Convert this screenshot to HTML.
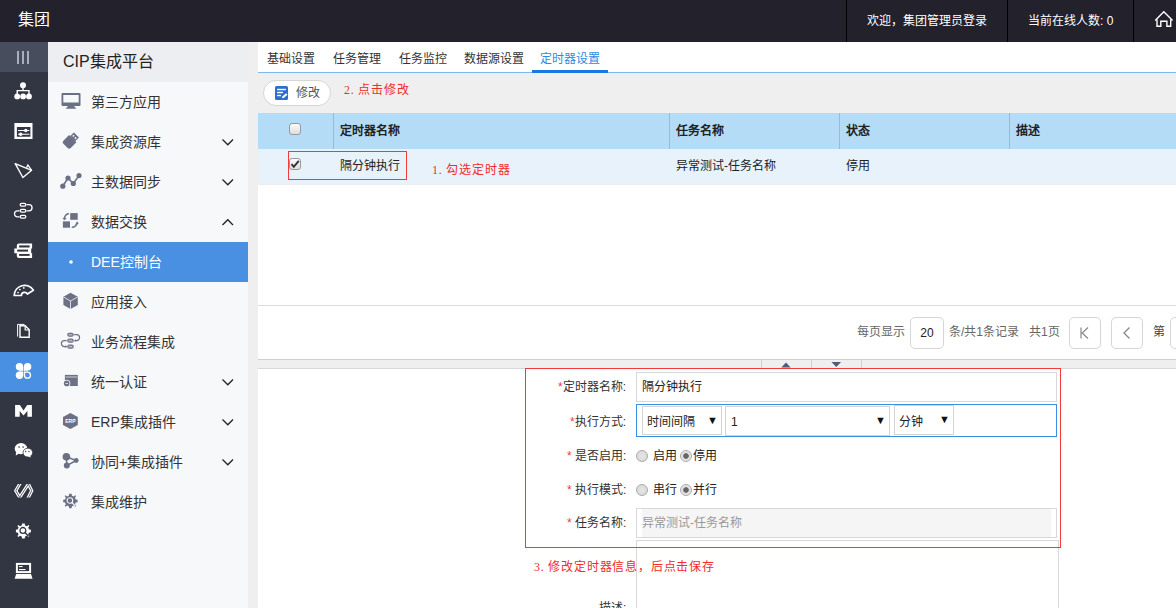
<!DOCTYPE html>
<html lang="zh-CN"><head><meta charset="utf-8">
<style>
*{margin:0;padding:0;box-sizing:border-box}
html,body{width:1176px;height:608px;overflow:hidden;background:#fff;font-family:"Liberation Sans",sans-serif;}
.abs{position:absolute}
#top{position:absolute;left:0;top:0;width:1176px;height:42px;background:#22212c;color:#fff}
#top .brand{position:absolute;left:18px;top:11px;font-size:16px;line-height:18px}
#top .sep{position:absolute;top:0;width:1px;height:42px;background:#000}
#top .t{position:absolute;top:14px;font-size:12px;line-height:14px;color:#fff}
#strip{position:absolute;left:0;top:42px;width:48px;height:566px;background:#323642}
#strip .it{position:absolute;left:0;width:48px;height:40px}
#side{position:absolute;left:48px;top:42px;width:200px;height:566px;background:#f7f8fa}
#side .hd{position:absolute;left:0;top:0;width:200px;height:40px;background:#eceef2;font-size:16px;line-height:18px;color:#222}
#side .mi{position:absolute;left:0;width:200px;height:40px;font-size:14px;color:#333}
#side .mi .tx{position:absolute;left:43px;top:12px;line-height:16px}
#side .mi .ic{position:absolute;left:13px;top:11px;width:20px;height:18px}
#side .mi .chev{position:absolute;left:174px;top:16px;width:12px;height:8px}
#gap{position:absolute;left:248px;top:42px;width:10px;height:566px;background:#efefef}
#main{position:absolute;left:258px;top:42px;width:918px;height:566px;background:#fff}
.tab{position:absolute;top:10px;font-size:12px;line-height:14px;color:#333}
.tab.act{color:#2f8ae0}
.btn{background:#fff;border:1px solid #d6d6d6;border-radius:13px}
.red{font-family:"Liberation Serif",serif;font-size:12px;line-height:15px;letter-spacing:0.8px;padding-top:1px;color:#f22b2b;font-weight:500}
.vd{position:absolute;top:71px;width:1px;height:36px;background:#a2b6d3}
.cb{position:absolute;width:12px;height:12px;border:1px solid #999;border-radius:3px;background:linear-gradient(#fbfbfb,#dedede)}
.th{position:absolute;top:82px;font-size:12px;line-height:14px;font-weight:bold;color:#222}
.td{position:absolute;top:117px;font-size:12px;line-height:14px;color:#222}
.pg{position:absolute;top:283px;font-size:12px;line-height:14px;color:#666}
.pbox{position:absolute;top:275px;height:32px;border:1px solid #d6d6d6;border-radius:5px;background:#fff}
.lbl{position:absolute;margin-top:1px;font-size:12px;line-height:14px;color:#333}
.st{color:#ee3c3c}
.inp{position:absolute;border:1px solid #d8d8d8;background:#fff}
.sel{position:absolute;border:1px solid #d4d4d4;background:#fff}
.ftx{position:absolute;margin-top:1px;font-size:12px;line-height:14px;color:#222}
.arr{position:absolute;font-size:11px;line-height:10px;color:#111}
.rad{position:absolute;width:12px;height:12px;border:1px solid #aaa;border-radius:50%;background:radial-gradient(#e6e6e6,#d6d6d6)}
.rad.on{background:radial-gradient(circle,#666 0,#666 2.4px,#ddd 3.1px,#eee 6px)}
</style></head><body>
<div id="top">
  <div class="brand">集团</div>
  <div class="sep" style="left:846px"></div>
  <div class="t" style="left:867px">欢迎，集团管理员登录</div>
  <div class="sep" style="left:1007px"></div>
  <div class="t" style="left:1028px">当前在线人数: 0</div>
  <div class="sep" style="left:1133px"></div>
  <svg class="abs" style="left:1150px;top:6px" width="26" height="26" viewBox="1150 6 26 26"><path d="M1155.2 20.4L1163.8 11.8L1172.6 20.4M1157 19.6V26.2H1160.8V21.2H1166.9V26.2H1170.7V19.6" fill="none" stroke="#fff" stroke-width="1.4" stroke-linejoin="miter"/></svg>
</div>
<div id="strip">
  <div class="it" style="top:0;height:30px;background:#484d5e"></div>
  <div class="it" style="top:310px;height:40px;background:#4a90e2"></div>
</div>
<svg class="abs" style="left:0;top:0;z-index:5" width="48" height="608" viewBox="0 0 48 608">
 <g fill="#b3bac6"><rect x="17.1" y="51" width="1.8" height="13"/><rect x="22.1" y="51" width="1.8" height="13"/><rect x="27.1" y="51" width="1.8" height="13"/></g>
 <g fill="#fff" stroke="none">
  <circle cx="23" cy="85.3" r="3"/><circle cx="17.2" cy="96.4" r="2.9"/><circle cx="23.1" cy="96.4" r="2.9"/><circle cx="29" cy="96.4" r="2.9"/>
 </g>
 <path d="M23 87.5V90.6M17.2 94V90.6H29V94" stroke="#fff" stroke-width="1.4" fill="none"/>
 <path fill-rule="evenodd" d="M14.4 122.9H32.5V139H14.4ZM16.9 127.1V136.8H30.4V127.1Z" fill="#fff"/>
 <path d="M18 130.5H29.4M18 134.2H29.4" stroke="#fff" stroke-width="1.1"/>
 <circle cx="25.8" cy="130.5" r="1.7" fill="#fff"/><circle cx="20.7" cy="134.2" r="1.7" fill="#fff"/>
 <path d="M15.2 163.6L31.6 170.3L22.9 177.5Z" stroke="#fff" stroke-width="1.4" fill="none" stroke-linejoin="round"/>
 <path d="M26.6 167.6L27.9 165L31.6 170.3" stroke="#fff" stroke-width="1.3" fill="none"/>
 <g fill="none" stroke="#fff" stroke-width="1.3">
  <rect x="20.2" y="203.3" width="5.6" height="2.8" rx="1.4"/><rect x="20.2" y="209.4" width="5.6" height="2.8" rx="1.4"/><rect x="20.2" y="215.4" width="5.6" height="2.8" rx="1.4"/>
  <path d="M26.5 204.7H29A3 3 0 0 1 29 210.8H26.5"/><path d="M19.5 210.8H17.5A3 3 0 0 0 17.5 216.8H19.5"/>
 </g>
 <path d="M19 243.4H32.1V248.6H16.8V245.6A2.2 2.2 0 0 1 19 243.4ZM14.3 248.6H31.2V253.2H14.3ZM16.8 253.2H32.1V258H19A2.2 2.2 0 0 1 16.8 255.8Z" fill="#fff"/>
 <rect x="19.1" y="245.4" width="10.5" height="2.1" fill="#323642"/><rect x="17.2" y="249.6" width="10.8" height="2" fill="#323642"/><rect x="19.1" y="254" width="10.5" height="1.9" fill="#323642"/>
 <path d="M14.2 295.5A10.4 10.4 0 0 1 33.4 290.3L27.4 294A3.2 3.2 0 0 0 21.4 295.5Z" fill="none" stroke="#fff" stroke-width="1.7" stroke-linejoin="round"/>
 <circle cx="18" cy="292.5" r="0.85" fill="#fff"/><circle cx="19.9" cy="289.5" r="0.85" fill="#fff"/><circle cx="23.8" cy="287.9" r="0.85" fill="#fff"/>
 <path d="M17.6 336.6V324.4H24.5" fill="none" stroke="#fff" stroke-width="1"/>
 <path d="M20 325.8H25.2L29.2 329.8V337.2H20Z" fill="none" stroke="#fff" stroke-width="1.4"/>
 <path d="M25.2 325.8V330H29.4" fill="none" stroke="#fff" stroke-width="1.2"/>
 <g fill="#fff">
  <circle cx="19.5" cy="366.8" r="3.7"/><rect x="19.5" y="366.8" width="3.7" height="4"/>
  <circle cx="27.6" cy="366.8" r="3.7"/><rect x="23.8" y="366.8" width="3.8" height="4"/>
  <circle cx="19.5" cy="375.2" r="3.7"/><rect x="19.5" y="371.5" width="3.7" height="3.7"/>
 </g>
 <path d="M24.5 372.2H27.5A3 3 0 1 1 24.5 375.2Z" fill="none" stroke="#fff" stroke-width="1.3"/>
 <path d="M15.1 405H19.9L23.5 410.6L27.2 405H31.9V416.8H27.4V411L23.5 415.6L19.7 411V416.8H15.1Z" fill="#fff"/>
 <ellipse cx="21" cy="448.6" rx="6.3" ry="5.6" fill="#fff"/><path d="M16 452L15.8 455.4L19 453.5Z" fill="#fff"/>
 <ellipse cx="27.8" cy="452.6" rx="4.8" ry="4.4" fill="#fff" stroke="#323642" stroke-width="0.8"/><path d="M30 455.5L30.8 457.6L28 456.5Z" fill="#fff"/>
 <g fill="#323642"><rect x="18.5" y="446.3" width="1.2" height="1.5"/><rect x="22.5" y="446.3" width="1.2" height="1.5"/><rect x="25.2" y="450.8" width="1.1" height="1.4"/><rect x="28.4" y="450.8" width="1.1" height="1.4"/></g>
 <clipPath id="cc"><rect x="10" y="484" width="28" height="13.4"/></clipPath>
 <g clip-path="url(#cc)"><path d="M20.9 482L15.8 490.7L19.7 497.4L28.4 484L31.7 490.7L27.4 499.4" fill="none" stroke="#fff" stroke-width="3.2" stroke-linejoin="miter"/>
 <path d="M20.9 482L15.8 490.7L19.7 497.4L28.4 484L31.7 490.7L27.4 499.4" fill="none" stroke="#323642" stroke-width="0.9" stroke-linejoin="miter" opacity="0.85"/></g>
 <g transform="translate(23.4 531)"><path fill="#fff" d="M-1.3-7.5H1.3L1.7-5.5L3.4-4.8L5.1-6L6-5.1L4.8-3.4L5.5-1.7L7.5-1.3V1.3L5.5 1.7L4.8 3.4L6 5.1L5.1 6L3.4 4.8L1.7 5.5L1.3 7.5H-1.3L-1.7 5.5L-3.4 4.8L-5.1 6L-6 5.1L-4.8 3.4L-5.5 1.7L-7.5 1.3V-1.3L-5.5-1.7L-4.8-3.4L-6-5.1L-5.1-6L-3.4-4.8L-1.7-5.5Z"/>
  <circle cx="-0.5" cy="-0.6" r="2.9" fill="none" stroke="#323642" stroke-width="1.3"/><path d="M1.6 1.6L5.2 5.2" stroke="#323642" stroke-width="1.4"/></g>
 <rect x="16.9" y="563.9" width="13.2" height="8.2" fill="none" stroke="#fff" stroke-width="2"/>
 <rect x="19" y="566" width="3.6" height="1.1" fill="#fff"/><rect x="19" y="569" width="6.5" height="1.1" fill="#fff"/>
 <path d="M16.2 574H31L32.6 578.8H14.6Z" fill="#fff"/>
</svg>
<div id="side">
  <div class="hd"><span class="abs" style="left:15px;top:11px">CIP集成平台</span></div>
  <div class="mi" style="top:40px"><span class="tx">第三方应用</span></div>
  <div class="mi" style="top:80px"><span class="tx">集成资源库</span></div>
  <div class="mi" style="top:120px"><span class="tx">主数据同步</span></div>
  <div class="mi" style="top:160px"><span class="tx">数据交换</span></div>
  <div class="mi" style="top:200px;background:#4a90e2;color:#fff"><span class="tx">DEE控制台</span></div>
  <div class="mi" style="top:240px"><span class="tx">应用接入</span></div>
  <div class="mi" style="top:280px"><span class="tx">业务流程集成</span></div>
  <div class="mi" style="top:320px"><span class="tx">统一认证</span></div>
  <div class="mi" style="top:360px"><span class="tx">ERP集成插件</span></div>
  <div class="mi" style="top:400px"><span class="tx">协同+集成插件</span></div>
  <div class="mi" style="top:440px"><span class="tx">集成维护</span></div>
</div>
<svg class="abs" style="left:48px;top:0;z-index:5" width="200" height="608" viewBox="48 0 200 608">
 <g fill="#6b7084">
  <path fill-rule="evenodd" d="M62.5 93H79.5A1 1 0 0 1 80.5 94V105A1 1 0 0 1 79.5 106H62.5A1 1 0 0 1 61.5 105V94A1 1 0 0 1 62.5 93ZM63.3 94.9V102.4H78.7V94.9Z"/>
  <path d="M68 106H74L76.3 108.7H65.7Z"/>
  <g transform="translate(70.6 140.8) rotate(-45)"><path d="M2.8 -3.6H8.2V3.6H2.8Z"/><path d="M-5 -5.2H3V5.2H-5A2.2 2.2 0 0 1 -7.2 3V-3A2.2 2.2 0 0 1 -5 -5.2Z"/><rect x="4.6" y="-2.3" width="1.7" height="1.6" fill="#f7f8fa"/><rect x="4.6" y="0.7" width="1.7" height="1.6" fill="#f7f8fa"/></g>
  <circle cx="62.8" cy="186.2" r="2.6"/><circle cx="68" cy="178" r="2.6"/><circle cx="73.3" cy="183.5" r="2.6"/><circle cx="79" cy="175.6" r="2.6"/>
  <rect x="70.2" y="213.1" width="7.5" height="6.7"/><rect x="62.9" y="221.4" width="7.1" height="6.3"/>
  <path d="M63.8 222.5H-0Z"/>
  <path d="M62.5 217.8L64.2 220.3L66.8 218.2Z"/>
  <path d="M77.3 221.2L78.6 224L75.4 224.4Z"/>
  <path d="M63.4 296.8L70.5 292.7L77.8 296.8V305L70.5 309L63.4 305Z"/>
  <path d="M64.9 374.9H77.8V386H64.9Z"/>
  <path d="M70.4 413L77.8 417V425L70.4 429L63 425V417Z"/>
  <circle cx="66.4" cy="456.7" r="3.8"/><circle cx="76.2" cy="460.5" r="2.4"/><circle cx="66.8" cy="465.6" r="3"/>
 </g>
 <path d="M62.8 186.2L68 178L73.3 183.5L79 175.6" stroke="#6b7084" stroke-width="1.6" fill="none"/>
 <path d="M68.8 213.6A5 5 0 0 0 64.5 219" stroke="#6b7084" stroke-width="1.6" fill="none"/>
 <path d="M71.8 227.3A5 5 0 0 0 77 222.5" stroke="#6b7084" stroke-width="1.6" fill="none"/>
 <path d="M70.5 301V309M70.5 301L63.6 297M70.5 301L77.6 297" stroke="#f7f8fa" stroke-width="0.8" fill="none"/>
 <g fill="#b4b7c2" stroke="#6b7084" stroke-width="1.2">
  <rect x="67.8" y="333.3" width="5.4" height="2.9" rx="1.45"/><rect x="67.8" y="339.2" width="5.4" height="2.9" rx="1.45"/><rect x="67.8" y="345.2" width="5.4" height="2.9" rx="1.45"/>
 </g>
 <g fill="none" stroke="#6b7084" stroke-width="1.2">
  <path d="M74.2 334.7H76.6A2.95 2.95 0 0 1 76.6 340.6H74.6"/><path d="M66.6 340.6H64.4A3 3 0 0 0 64.4 346.6H66.6"/>
 </g>
 <path d="M74.3 340.6L76 339.2V342Z" fill="#6b7084"/><path d="M67 346.6L65.3 345.2V348Z" fill="#6b7084"/>
 <path d="M65.5 377H77.2" stroke="#f7f8fa" stroke-width="0.7"/>
 <circle cx="66.7" cy="383.4" r="3.6" fill="#f7f8fa"/><circle cx="66.7" cy="383.4" r="2.8" fill="#6b7084"/><path d="M65.4 383.4H68" stroke="#f7f8fa" stroke-width="0.8"/>
 <text x="70.4" y="423.2" font-family="Liberation Sans" font-size="5" font-weight="bold" fill="#fff" text-anchor="middle">ERP</text>
 <path d="M66.4 456.7L76.2 460.5L66.8 465.6Z" stroke="#6b7084" stroke-width="1.5" fill="none"/>
 <g transform="translate(70.4 501)"><path fill="#6b7084" d="M-1.2-7.2H1.2L1.6-5.3L3.3-4.6L4.9-5.7L5.7-4.9L4.6-3.3L5.3-1.6L7.2-1.2V1.2L5.3 1.6L4.6 3.3L5.7 4.9L4.9 5.7L3.3 4.6L1.6 5.3L1.2 7.2H-1.2L-1.6 5.3L-3.3 4.6L-4.9 5.7L-5.7 4.9L-4.6 3.3L-5.3 1.6L-7.2 1.2V-1.2L-5.3-1.6L-4.6-3.3L-5.7-4.9L-4.9-5.7L-3.3-4.6L-1.6-5.3Z"/>
  <circle cx="-0.5" cy="-0.5" r="2.8" fill="none" stroke="#f7f8fa" stroke-width="1.1"/><path d="M1.5 1.5L4.8 4.8" stroke="#f7f8fa" stroke-width="1.2"/></g>
 <g fill="none" stroke="#222" stroke-width="1.3">
  <path d="M222.5 139.5L227.8 144.8L233 139.5"/>
  <path d="M222.5 179.5L227.8 184.8L233 179.5"/>
  <path d="M222.5 225L227.8 219.7L233 225"/>
  <path d="M222.5 379.5L227.8 384.8L233 379.5"/>
  <path d="M222.5 419.5L227.8 424.8L233 419.5"/>
  <path d="M222.5 459.5L227.8 464.8L233 459.5"/>
 </g>
 <circle cx="71" cy="262" r="1.8" fill="#fff"/>
</svg>
<div id="gap"></div>
<div id="main">
  <!-- tabs -->
  <div class="abs" style="left:0;top:0;width:918px;height:31px;background:#fff;border-bottom:1px solid #7fb8ee"></div>
  <div class="tab" style="left:9px">基础设置</div>
  <div class="tab" style="left:75px">任务管理</div>
  <div class="tab" style="left:141px">任务监控</div>
  <div class="tab" style="left:206px">数据源设置</div>
  <div class="tab act" style="left:282px">定时器设置</div>
  <div class="abs" style="left:274px;top:28px;width:76px;height:3px;background:#1a78e0"></div>
  <!-- toolbar -->
  <div class="abs" style="left:0;top:31px;width:918px;height:40px;background:#efefef"></div>
  <div class="abs btn" style="left:5px;top:38px;width:68px;height:26px"></div>
  <svg class="abs" style="left:17px;top:44px" width="14" height="14" viewBox="0 0 14 14"><rect x="0" y="0" width="13" height="14" rx="1.5" fill="#2e6fcd"/><rect x="2.1" y="2.8" width="8.8" height="1.4" fill="#fff"/><rect x="2.1" y="5.8" width="5.8" height="1.4" fill="#fff"/><rect x="2.1" y="8.8" width="3.8" height="1.4" fill="#fff"/><path d="M7.4 11.8 L11.8 8" stroke="#fff" stroke-width="2"/></svg>
  <div class="abs" style="left:38px;top:44px;font-size:12px;line-height:14px;color:#555">修改</div>
  <div class="abs red" style="left:86px;top:40px">2. 点击修改</div>
  <!-- table header -->
  <div class="abs" style="left:0;top:71px;width:918px;height:36px;background:#b5dcf7"></div>
  <div class="abs vd" style="left:75px"></div>
  <div class="abs vd" style="left:411px"></div>
  <div class="abs vd" style="left:581px"></div>
  <div class="abs vd" style="left:751px"></div>
  <div class="abs cb" style="left:31px;top:81px"></div>
  <div class="abs th" style="left:82px">定时器名称</div>
  <div class="abs th" style="left:418px">任务名称</div>
  <div class="abs th" style="left:588px">状态</div>
  <div class="abs th" style="left:758px">描述</div>
  <!-- row -->
  <div class="abs" style="left:0;top:107px;width:918px;height:35px;background:#e8f2fb"></div>
  <div class="abs" style="left:0;top:142px;width:918px;height:1px;background:#eaeced"></div>
  <div class="abs cb chk" style="left:31px;top:116px"></div>
  <svg class="abs" style="left:31px;top:116px" width="12" height="12" viewBox="0 0 12 12"><path d="M2.5 6.2L4.8 8.8L9.8 2.8" fill="none" stroke="#333" stroke-width="2"/></svg>
  <div class="abs td" style="left:82px">隔分钟执行</div>
  <div class="abs td" style="left:418px">异常测试-任务名称</div>
  <div class="abs td" style="left:588px">停用</div>
  <div class="abs" style="left:30px;top:109px;width:119px;height:29px;border:1px solid #f23a3a"></div>
  <div class="abs red" style="left:174px;top:120px">1. 勾选定时器</div>
  <!-- pager -->
  <div class="abs" style="left:0;top:263px;width:918px;height:1px;background:#dcdcdc"></div>
  <div class="abs pg" style="left:599px">每页显示</div>
  <div class="abs pbox" style="left:652px;width:34px;color:#222;font-size:12px;text-align:center;line-height:30px">20</div>
  <div class="abs pg" style="left:691px">条/共1条记录</div>
  <div class="abs pg" style="left:771px">共1页</div>
  <div class="abs pbox" style="left:811px;width:32px"></div>
  <div class="abs pbox" style="left:853px;width:32px"></div>
  <svg class="abs" style="left:811px;top:275px" width="32" height="32" viewBox="0 0 32 32"><path d="M12 10.5V21.5M19 10.5L13.2 16L19 21.5" fill="none" stroke="#888" stroke-width="1.2"/></svg>
  <svg class="abs" style="left:853px;top:275px" width="32" height="32" viewBox="0 0 32 32"><path d="M18.5 10.5L13 16L18.5 21.5" fill="none" stroke="#888" stroke-width="1.3"/></svg>
  <div class="abs pg" style="left:895px;color:#444">第</div>
  <div class="abs pbox" style="left:912px;width:32px"></div>
  <!-- splitter -->
  <div class="abs" style="left:0;top:317px;width:918px;height:1px;background:#cfcfcf"></div>
  <div class="abs" style="left:0;top:318px;width:918px;height:8px;background:#efefef"></div>
  <div class="abs" style="left:0;top:326px;width:918px;height:1px;background:#d8d8d8"></div>
  <!-- splitter separators & arrows -->
  <div class="abs" style="left:503px;top:318px;width:1px;height:8px;background:#d0d0d0"></div>
  <div class="abs" style="left:553px;top:318px;width:1px;height:8px;background:#d0d0d0"></div>
  <div class="abs" style="left:603px;top:318px;width:1px;height:8px;background:#d0d0d0"></div>
  <svg class="abs" style="left:523px;top:320px" width="10" height="6" viewBox="0 0 10 6"><path d="M0.3 5.6 L5 0.6 L9.7 5.6Z" fill="#4e5d78"/></svg>
  <svg class="abs" style="left:573px;top:319px" width="11" height="7" viewBox="0 0 11 7"><path d="M0.5 1 L5.3 6 L10.1 1Z" fill="#4e5d78"/></svg>
  <!-- form -->
  <div class="abs lbl" style="left:300px;top:337px"><span class="st">*</span>定时器名称:</div>
  <div class="abs inp" style="left:378px;top:330px;width:421px;height:30px"></div>
  <div class="abs ftx" style="left:384px;top:337px">隔分钟执行</div>
  <div class="abs lbl" style="left:312px;top:372px"><span class="st">*</span>执行方式:</div>
  <div class="abs" style="left:378px;top:362px;width:421px;height:33px;border:1.5px solid #3a8ee6"></div>
  <div class="abs sel" style="left:384px;top:364px;width:80px;height:29px"></div>
  <div class="abs ftx" style="left:389px;top:372px">时间间隔</div>
  <div class="abs arr" style="left:449px;top:373px">▼</div>
  <div class="abs sel" style="left:467px;top:364px;width:165px;height:30px"></div>
  <div class="abs ftx" style="left:473px;top:372px">1</div>
  <div class="abs arr" style="left:617px;top:373px">▼</div>
  <div class="abs sel" style="left:636px;top:363px;width:60px;height:30px"></div>
  <div class="abs ftx" style="left:641px;top:372px">分钟</div>
  <div class="abs arr" style="left:681px;top:372px">▼</div>
  <div class="abs lbl" style="left:309px;top:406px"><span class="st">*</span> 是否启用:</div>
  <div class="abs rad" style="left:378px;top:408px"></div>
  <div class="abs ftx" style="left:395px;top:406px">启用</div>
  <div class="abs rad on" style="left:422px;top:408px"></div>
  <div class="abs ftx" style="left:435px;top:406px">停用</div>
  <div class="abs lbl" style="left:309px;top:440px"><span class="st">*</span> 执行模式:</div>
  <div class="abs rad" style="left:378px;top:442px"></div>
  <div class="abs ftx" style="left:395px;top:440px">串行</div>
  <div class="abs rad on" style="left:422px;top:442px"></div>
  <div class="abs ftx" style="left:435px;top:440px">并行</div>
  <div class="abs lbl" style="left:309px;top:473px"><span class="st">*</span> 任务名称:</div>
  <div class="abs inp" style="left:378px;top:466px;width:421px;height:30px"></div>
  <div class="abs" style="left:384px;top:467px;width:409px;height:28px;background:#f5f5f5"></div>
  <div class="abs ftx" style="left:384px;top:473px;color:#999">异常测试-任务名称</div>
  <div class="abs inp" style="left:378px;top:498px;width:423px;height:80px"></div>
  <div class="abs" style="left:267px;top:326px;width:536px;height:180px;border:1px solid #f23a3a"></div>
  <div class="abs red" style="left:276px;top:517px">3. 修改定时器信息，后点击保存</div>
  <div class="abs lbl" style="left:341px;top:558px">描述:</div>
</div>
</body></html>
